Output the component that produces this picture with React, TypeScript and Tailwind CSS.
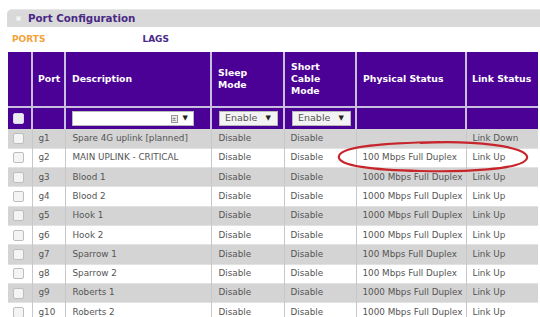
import React from "react";

const rows = [
  ["g1", "Spare 4G uplink [planned]", "Disable", "Disable", "", "Link Down"],
  ["g2", "MAIN UPLINK - CRITICAL", "Disable", "Disable", "100 Mbps Full Duplex", "Link Up"],
  ["g3", "Blood 1", "Disable", "Disable", "1000 Mbps Full Duplex", "Link Up"],
  ["g4", "Blood 2", "Disable", "Disable", "1000 Mbps Full Duplex", "Link Up"],
  ["g5", "Hook 1", "Disable", "Disable", "1000 Mbps Full Duplex", "Link Up"],
  ["g6", "Hook 2", "Disable", "Disable", "1000 Mbps Full Duplex", "Link Up"],
  ["g7", "Sparrow 1", "Disable", "Disable", "100 Mbps Full Duplex", "Link Up"],
  ["g8", "Sparrow 2", "Disable", "Disable", "100 Mbps Full Duplex", "Link Up"],
  ["g9", "Roberts 1", "Disable", "Disable", "1000 Mbps Full Duplex", "Link Up"],
  ["g10", "Roberts 2", "Disable", "Disable", "1000 Mbps Full Duplex", "Link Up"],
];

function Check({ light }: { light?: boolean }) {
  return (
    <div
      className={`w-[11px] h-[11px] rounded-[2px] border ${
        light ? "border-[#d8d8e8] bg-[#ececf0]" : "border-[#bdbdbd] bg-[#f4f4f4]"
      }`}
    />
  );
}

function Select() {
  return (
    <div className="flex items-center justify-between h-[15px] w-[59px] bg-[#f3f3f3] border border-[#b8b8b8] pl-[5px] pr-[6px] text-[9.5px] text-[#555]">
      <span>Enable</span>
      <span className="text-[7px] text-[#222]">▼</span>
    </div>
  );
}

export default function App() {
  return (
    <div
      className="relative w-[540px] h-[317px] bg-white overflow-hidden"
      style={{ fontFamily: '"DejaVu Sans", Verdana, sans-serif' }}
    >
      <div className="pt-[9px] pl-[7px]">
        <div className="flex items-center h-[18px] bg-[#d9d9d9] border-t border-[#e6e6e6] rounded-tl-[5px]">
          <div className="ml-[9px] w-[5px] h-[5px] bg-[#f4f4f4] border border-[#e8e8e8]" />
          <span className="ml-[7px] text-[10.3px] font-bold text-[#4a2a86]">Port Configuration</span>
        </div>
        <div className="flex items-center h-[25px] text-[9px] font-bold">
          <span className="ml-[5px] text-[#f4a23a]">PORTS</span>
          <span className="ml-[97px] text-[#4a2a86]">LAGS</span>
        </div>
      </div>
      <table className="ml-[8px] border-collapse table-fixed w-[530px] text-[8.8px] text-[#555]">
        <colgroup>
          <col className="w-[24px]" />
          <col className="w-[33px]" />
          <col className="w-[146px]" />
          <col className="w-[73px]" />
          <col className="w-[72px]" />
          <col className="w-[110px]" />
          <col className="w-[72px]" />
        </colgroup>
        <thead>
          <tr className="h-[55px] bg-[#4b0096] text-white text-[9.3px] font-bold leading-[12px] text-left">
            <th className="border-r-2 border-[#c9bde0]" />
            <th className="pl-[5px] border-r-2 border-[#c9bde0]">Port</th>
            <th className="pl-[6px] border-r-2 border-[#c9bde0]">Description</th>
            <th className="pl-[6px] border-r-2 border-[#c9bde0]">Sleep<br />Mode</th>
            <th className="pl-[6px] border-r-2 border-[#c9bde0]">Short<br />Cable<br />Mode</th>
            <th className="pl-[6px] border-r-2 border-[#c9bde0]">Physical Status</th>
            <th className="pl-[5px]">Link Status</th>
          </tr>
          <tr className="h-[22px] bg-[#4b0096] border-t-2 border-[#c9bde0]">
            <td className="pl-[5px] border-r-2 border-[#c9bde0]">
              <Check light />
            </td>
            <td className="border-r-2 border-[#c9bde0]" />
            <td className="pl-[6px] border-r-2 border-[#c9bde0]">
              <div className="flex items-center justify-end h-[15px] w-[122px] bg-white border border-[#b8b8b8] pr-[5px] gap-[5px]">
                <div className="w-[7px] h-[8px] border border-[#999] bg-[#eee] text-[6px] leading-[6px] text-center text-[#666]">±</div>
                <span className="text-[7px] text-[#222]">▼</span>
              </div>
            </td>
            <td className="pl-[7px] border-r-2 border-[#c9bde0]">
              <Select />
            </td>
            <td className="pl-[7px] border-r-2 border-[#c9bde0]">
              <Select />
            </td>
            <td className="border-r-2 border-[#c9bde0]" />
            <td />
          </tr>
        </thead>
        <tbody>
          {rows.map((r, i) => (
            <tr
              key={r[0]}
              className={`h-[19.3px] ${i % 2 === 0 ? "bg-[#d4d4d4]" : "bg-white"} border-b border-[#e2e2e2]`}
            >
              <td className="pl-[5px] border-r border-[#c8c8c8]">
                <Check />
              </td>
              <td className="pl-[6px] border-r border-[#c8c8c8]">{r[0]}</td>
              <td className="pl-[7px] border-r border-[#c8c8c8] whitespace-nowrap">{r[1]}</td>
              <td className="pl-[7px] border-r border-[#c8c8c8]">{r[2]}</td>
              <td className="pl-[6px] border-r border-[#c8c8c8]">{r[3]}</td>
              <td className="pl-[6px] border-r border-[#c8c8c8] whitespace-nowrap">{r[4]}</td>
              <td className="pl-[6px]">{r[5]}</td>
            </tr>
          ))}
        </tbody>
      </table>
      <svg
        className="absolute left-0 top-0 pointer-events-none"
        width="540"
        height="317"
        viewBox="0 0 540 317"
      >
        <path
          d="M420 143 C 470 140, 530 146, 527 158 C 524 170, 460 172, 420 171 C 375 170, 336 166, 339 156 C 342 146, 385 143, 440 142"
          fill="none"
          stroke="#c8242b"
          strokeWidth="2.2"
        />
      </svg>
    </div>
  );
}
